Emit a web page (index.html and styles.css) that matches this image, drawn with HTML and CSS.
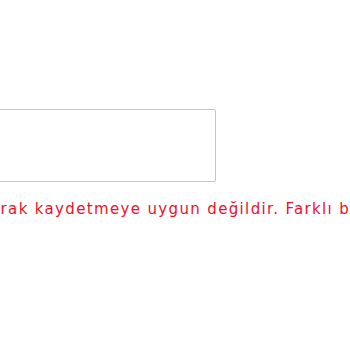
FILE: index.html
```html
<!DOCTYPE html>
<html lang="tr">
<head>
<meta charset="utf-8">
<link rel="stylesheet" href="styles.css">
</head>
<body>
<div class="page">
  <div class="field">
    <textarea class="input"></textarea>
  </div>
  <p class="error">olarak kaydetmeye uygun değildir. Farklı bir ad deneyin.</p>
</div>
</body>
</html>
```
FILE: styles.css
```css
html, body {
  margin: 0;
  padding: 0;
  background: #fff;
  overflow: hidden;
}
.page {
  padding-top: 109px;
  font-family: "DejaVu Sans", sans-serif;
}
.field {
  margin-left: -200px;
}
.input {
  display: block;
  box-sizing: border-box;
  width: 416px;
  height: 73px;
  margin: 0;
  border: 1px solid #c6c6c6;
  border-radius: 2px;
  resize: none;
  background: #fff;
  outline: none;
}
.error {
  margin: 17px 0 0 -26px;
  white-space: nowrap;
  font-size: 15px;
  line-height: 20px;
  letter-spacing: 1.35px;
  color: #e4132b;
}
```
